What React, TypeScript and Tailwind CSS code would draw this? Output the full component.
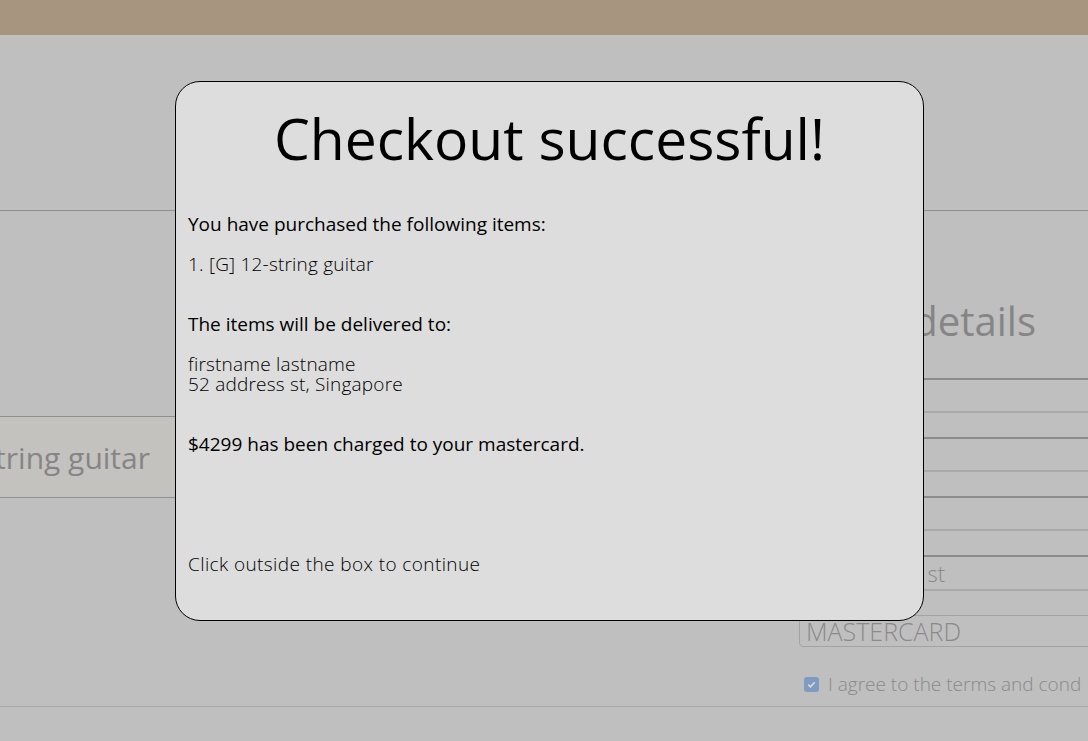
import React from "react";

const font = { fontFamily: '"Open Sans", "Noto Sans", sans-serif' };

function Background() {
    return (
        <div className="w-[1088px] h-[741px] overflow-hidden bg-[#bfbfbf] flex flex-col">
            {/* ヘッダー */}
            <div className="h-[35px] shrink-0 bg-[#a89580]" />

            <div className="h-[176px] shrink-0 border-b border-[#8f8f8f]" />

            <div className="flex flex-1">
                {/* カート */}
                <div className="w-[420px] shrink-0 pt-[205px]">
                    <div className="h-[82px] bg-[#c4c2bf] border-y border-[#8f8f8f] flex items-center justify-end pr-[270px]">
                        <span className="text-[30px] text-[#858585] whitespace-nowrap">[G] 12-string guitar</span>
                    </div>
                </div>

                {/* お支払い情報 */}
                <div className="flex-1 pl-[379px]">
                    <div className="h-[166px] flex items-end pb-[26px]">
                        <span className="text-[40px] text-[#858585] whitespace-nowrap -ml-[168px] w-[405px] text-right">
                            Payment details
                        </span>
                    </div>
                </div>
            </div>
        </div>
    );
}

function PaymentFields() {
    return (
        <div className="absolute left-[799px] top-[378px] w-[400px] flex flex-col text-[#8a8a8a]">
            <div className="flex flex-col gap-[24px]">
                <div className="h-[35px] border-t-2 border-t-[#8c8c8c] border-b-2 border-b-[#a9a9a9]" />
                <div className="h-[35px] border-t-2 border-t-[#8c8c8c] border-b-2 border-b-[#a9a9a9]" />
                <div className="h-[35px] border-t-2 border-t-[#8c8c8c] border-b-2 border-b-[#a9a9a9]" />
                <div className="h-[36px] border-t-2 border-t-[#8c8c8c] border-b-2 border-b-[#a9a9a9] flex items-center pl-[13px] text-[22px] font-light">
                    52 address st
                </div>
            </div>
            <div className="mt-[24px] h-[32px] border border-[#a3a3a3] rounded-[4px] flex items-center pl-[6px] text-[25px] font-light leading-none">
                MASTERCARD
            </div>
            <div className="mt-[23px] flex items-center gap-[9px] pl-[5px] text-[19px] font-light">
                <span className="w-[15px] h-[15px] shrink-0 rounded-[3px] bg-[#7f9bc0] flex items-center justify-center">
                    <svg width="11" height="11" viewBox="0 0 12 12">
                        <path d="M2.5 6.2l2.4 2.4 4.6-5" stroke="#d9d9d9" strokeWidth="1.8" fill="none" />
                    </svg>
                </span>
                <span className="whitespace-nowrap">I agree to the terms and cond</span>
            </div>
        </div>
    );
}

export default function App() {
    return (
        <div className="relative w-[1088px] h-[741px] overflow-hidden" style={font}>
            <Background />
            <PaymentFields />
            <div className="absolute left-0 right-0 top-[706px] border-t border-[#a9a9a9]" />

            {/* チェックアウト完了モーダル */}
            <div className="absolute left-[175px] top-[81px] w-[749px] h-[540px] bg-[#dddddd] border border-black rounded-[25px] px-[12px] text-black">
                <h1 className="text-center text-[57px] leading-none pt-[28px] h-[132px]">Checkout successful!</h1>
                <p className="text-[19px] leading-[20px]">You have purchased the following items:</p>
                <p className="text-[19px] leading-[20px] font-light tracking-[0.2px] mt-[20px]">1. [G] 12-string guitar</p>
                <p className="text-[19px] leading-[20px] mt-[40px]">The items will be delivered to:</p>
                <p className="text-[19px] leading-[20px] font-light tracking-[0.2px] mt-[20px]">firstname lastname</p>
                <p className="text-[19px] leading-[20px] font-light tracking-[0.2px]">52 address st, Singapore</p>
                <p className="text-[19px] leading-[20px] mt-[40px]">$4299 has been charged to your mastercard.</p>
                <p className="text-[19px] leading-[20px] font-light tracking-[0.4px] mt-[100px]">Click outside the box to continue</p>
            </div>
        </div>
    );
}
